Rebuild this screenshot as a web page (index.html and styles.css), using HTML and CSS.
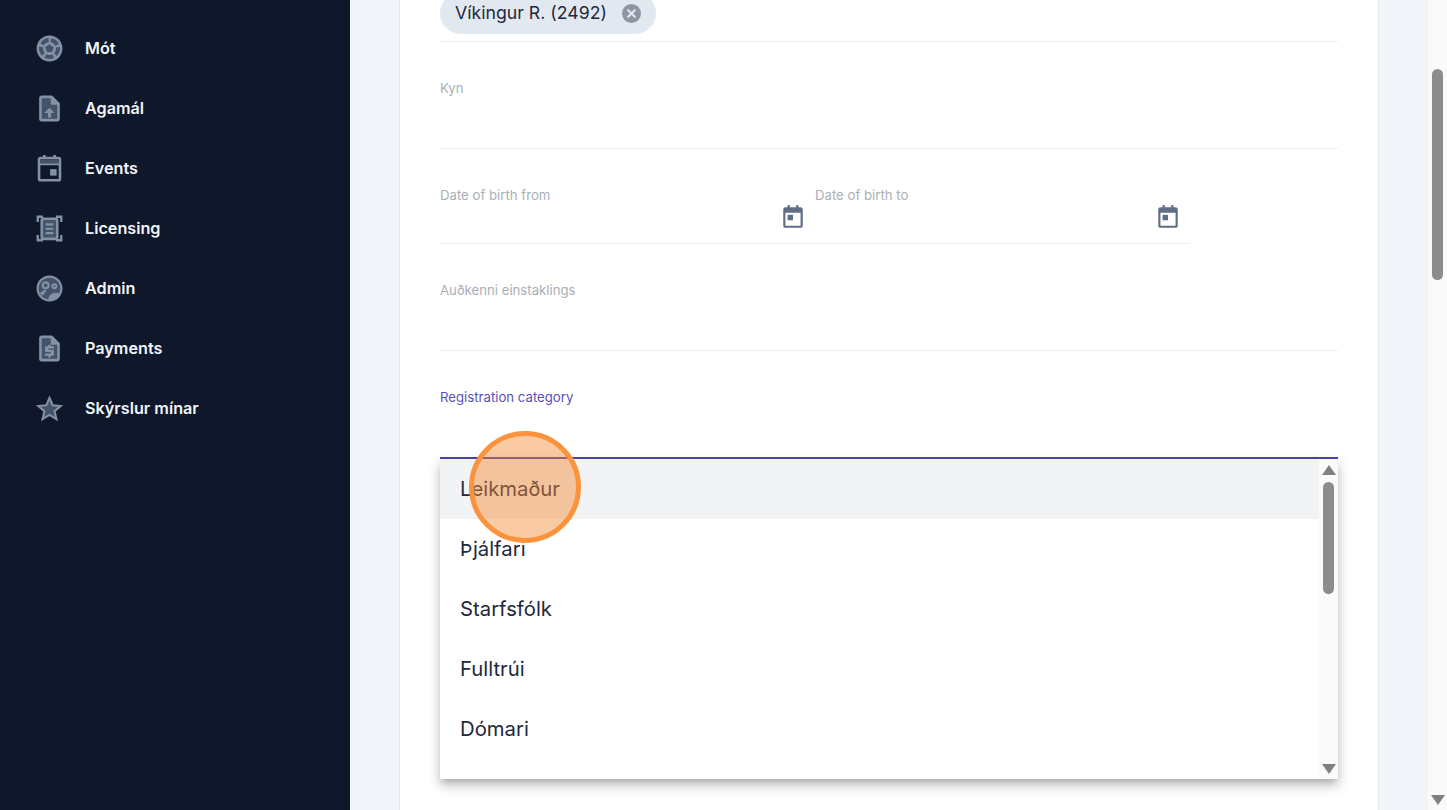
FILE: index.html
```html
<!DOCTYPE html>
<html lang="is">
<head>
<meta charset="utf-8">
<title>Registration</title>
<link rel="stylesheet" href="styles.css">
</head>
<body>
<div class="app">
  <nav class="sidebar">
    <a class="nav-item"><svg class="nav-icon" viewBox="0 0 24 24">
      <circle class="lit" cx="12" cy="12" r="10"/>
      <circle class="ring" cx="12" cy="12" r="6.600" transform="rotate(-81 12 12)"/>
      <path class="dim" d="M12 8.700l3.200 2.300-1.200 3.700h-4L8.800 11z"/>
    </svg><span>Mót</span></a>
    <a class="nav-item"><svg class="nav-icon" viewBox="0 0 24 24">
      <path class="dim edge" d="M6 3h7.600L19 8.400V20a1 1 0 0 1-1 1H6a1 1 0 0 1-1-1V4a1 1 0 0 1 1-1z"/>
      <path class="lit" d="M13 2l7 7h-7z"/>
      <path class="lit" d="M12 11.500l4 4h-2.800V19h-2.400v-3.500H8z"/>
    </svg><span>Agamál</span></a>
    <a class="nav-item"><svg class="nav-icon" viewBox="0 0 24 24">
      <path class="lit" d="M7 1.500h2V4H7zM15 1.500h2V4h-2z"/>
      <rect class="edge none" x="3.900" y="3.900" width="16.200" height="17.200" rx="1.200"/>
      <rect class="dim" x="4.900" y="4.900" width="14.200" height="3.100"/>
      <rect class="lit" x="3.900" y="8" width="16.200" height="1.500"/>
      <rect class="lit" x="12.500" y="12.500" width="5" height="5"/>
    </svg><span>Events</span></a>
    <a class="nav-item"><svg class="nav-icon" viewBox="0 0 24 24">
      <path class="lit" d="M2 2h5v1.800H3.800V7H2zM17 2h5v5h-1.800V3.800H17zM2 17h1.800v3.200H7V22H2zM20.200 17H22v5h-5v-1.800h3.200z"/>
      <rect class="dim edge" x="6" y="4.500" width="12" height="15.500" rx="1.500"/>
      <path class="lit" d="M9 8h6v1.600H9zM9 11.400h6V13H9zM9 14.800h6v1.600H9z"/>
    </svg><span>Licensing</span></a>
    <a class="nav-item"><svg class="nav-icon" viewBox="0 0 24 24">
      <circle class="dim edge wide" cx="12" cy="12" r="9.200"/>
      <circle class="none edge wide" cx="9" cy="9.500" r="2.300"/>
      <circle class="none edge wide" cx="15.800" cy="10.200" r="1.500"/>
      <path class="lit" d="M4.500 15.500L8.500 13l1.300.4-3 4.200z"/>
      <path class="lit" d="M11 20.500c.3-3 2.300-5.300 6-5.300 1.300 0 2.300.3 3.200.8a9 9 0 0 1-7.700 4.800z"/>
    </svg><span>Admin</span></a>
    <a class="nav-item"><svg class="nav-icon" viewBox="0 0 24 24">
      <path class="dim edge" d="M6 3h7.600L19 8.400V20a1 1 0 0 1-1 1H6a1 1 0 0 1-1-1V4a1 1 0 0 1 1-1z"/>
      <path class="lit" d="M13 2l7 7h-7z"/>
      <path class="lit" d="M11 9h2v1.200h2.500v1.800h-4.300v1h3.300a1 1 0 0 1 1 1v2.600a1 1 0 0 1-1 1H13V19h-2v-1.400H8.500v-1.800h4.400v-1H9.500a1 1 0 0 1-1-1v-2.600a1 1 0 0 1 1-1H11z"/>
    </svg><span>Payments</span></a>
    <a class="nav-item"><svg class="nav-icon" viewBox="0 0 24 24">
      <path class="dim edge thin" d="M12 3.800l2.450 5.700 6.200.55-4.700 4.070 1.400 6.060L12 16.980l-5.350 3.200 1.400-6.060-4.700-4.070 6.200-.55z"/>
    </svg><span>Skýrslur mínar</span></a>
  </nav>

  <main class="content">
    <form class="card">
      <div class="row chip-row">
        <span class="chip">Víkingur R. (2492)
          <svg class="chip-x" viewBox="0 0 20 20"><circle cx="10" cy="10" r="10"/><path d="M6.500 6.500l7 7M13.500 6.500l-7 7"/></svg>
        </span>
      </div>
      <div class="row field"><label class="label">Kyn</label></div>
      <div class="date-row">
        <div class="date-field"><label class="label">Date of birth from</label>
          <svg class="cal" viewBox="0 0 24 24"><path fill-rule="evenodd" d="M7 1h2v2h6V1h2v2h2a2 2 0 0 1 2 2v15a2 2 0 0 1-2 2H5a2 2 0 0 1-2-2V5a2 2 0 0 1 2-2h2V1zM5 8v12h14V8H5z"/><rect x="7" y="10" width="5" height="5"/></svg>
        </div>
        <div class="date-field"><label class="label">Date of birth to</label>
          <svg class="cal" viewBox="0 0 24 24"><path fill-rule="evenodd" d="M7 1h2v2h6V1h2v2h2a2 2 0 0 1 2 2v15a2 2 0 0 1-2 2H5a2 2 0 0 1-2-2V5a2 2 0 0 1 2-2h2V1zM5 8v12h14V8H5z"/><rect x="7" y="10" width="5" height="5"/></svg>
        </div>
      </div>
      <div class="row field"><label class="label">Auðkenni einstaklings</label></div>
      <div class="row field active"><label class="label">Registration category</label>
        <div class="dropdown">
          <ul class="options">
            <li class="option selected">Leikmaður</li>
            <li class="option">Þjálfari</li>
            <li class="option">Starfsfólk</li>
            <li class="option">Fulltrúi</li>
            <li class="option">Dómari</li>
          </ul>
          <div class="dd-scroll">
            <span class="arrow up"></span>
            <span class="dd-thumb"></span>
            <span class="arrow down push"></span>
          </div>
        </div>
        <span class="marker"></span>
      </div>
    </form>
  </main>

  <div class="page-scroll">
    <span class="page-thumb"></span>
    <span class="arrow down push"></span>
  </div>
</div>
</body>
</html>
```

FILE: styles.css
```css
* { box-sizing: border-box; }
html, body { margin: 0; height: 100%; overflow: hidden; }
body { font-family: Inter, "Noto Sans", sans-serif; color: #1e293b; }

.app { display: flex; height: 810px; width: 1447px; overflow: hidden; }

.sidebar {
  flex: 0 0 350px;
  background: #0f172a;
  padding: 18px 0 0 35px;
  display: flex;
  flex-direction: column;
}
.nav-item {
  height: 60px;
  display: flex;
  align-items: center;
  gap: 20px;
  color: #f1f5f9;
  font-size: 16.200px;
  font-weight: 600;
}
.nav-icon { width: 31px; height: 31px; flex: none; margin-left: -1px; }
.nav-icon .lit { fill: #8391a6; }
.nav-icon .dim { fill: #45536a; }
.nav-icon .none { fill: none; }
.nav-icon .edge { stroke: #8391a6; stroke-width: 2; }
.nav-icon .edge.wide { stroke-width: 1.700; }
.nav-icon .edge.thin { stroke-width: 1.600; }
.nav-icon .ring {
  fill: none;
  stroke: #45536a;
  stroke-width: 3;
  stroke-dasharray: 6.300 2;
}

.content {
  flex: 0 0 1078px;
  background: #f1f5f9;
  padding: 0 49px;
  overflow: hidden;
}
.card {
  height: 860px;
  margin-top: -8px;
  background: #fff;
  border-left: 1px solid #e5e8ee;
  border-right: 1px solid #e5e8ee;
  padding: 0 40px;
}
.row { border-bottom: 1px solid #eef0f3; position: relative; }
.chip-row { height: 50px; }
.chip {
  display: inline-flex;
  align-items: center;
  gap: 15px;
  height: 42px;
  padding: 0 15px;
  border-radius: 21px;
  background: #e2e8f0;
  font-size: 17.700px;
  line-height: 42px;
  color: #1e293b;
}
.chip-x { width: 19px; height: 19px; flex: none; }
.chip-x circle { fill: #8f96a3; }
.chip-x path { stroke: #e2e8f0; stroke-width: 2.200; stroke-linecap: round; fill: none; }

.field { height: 107px; padding-top: 38px; }
.label { display: block; font-size: 13.200px; line-height: 16px; color: #a9afb8; }
.date-row { display: flex; width: 750px; height: 95px; border-bottom: 1px solid #eef0f3; }
.date-field { flex: 0 0 375px; padding-top: 38px; position: relative; display: flex; }
.cal { width: 26px; height: 26px; fill: #5f6e84; position: absolute; left: 340px; top: 55px; }
.date-field .label { flex: 1; }

.field.active { height: 108px; border-bottom: 2px solid #4f46a8; }
.field.active .label { color: #5b50b8; }

.dropdown {
  position: absolute;
  left: 0;
  top: 108px;
  width: 898px;
  height: 320px;
  background: #fff;
  box-shadow: 0 5px 6px -3px rgba(0,0,0,.2), 0 8px 10px 1px rgba(0,0,0,.12), 0 3px 12px 1px rgba(0,0,0,.1);
  display: flex;
  overflow: hidden;
}
.options { list-style: none; margin: 0; padding: 0; flex: 1; }
.option {
  height: 60px;
  line-height: 60px;
  padding-left: 20px;
  font-size: 20.300px;
  color: #1e293b;
}
.option.selected { background: #f2f3f5; }

.dd-scroll {
  flex: 0 0 19px;
  background: #fafafa;
  display: flex;
  flex-direction: column;
  align-items: center;
  padding: 6px 0 5px;
}
.dd-thumb { width: 11px; height: 112px; margin-top: 7px; background: #8c8c8c; border-radius: 6px; }
.arrow { width: 0; height: 0; border-left: 7px solid transparent; border-right: 7px solid transparent; }
.arrow.up { border-bottom: 10px solid #808080; }
.arrow.down { border-top: 10px solid #808080; }
.push { margin-top: auto; }

.marker {
  position: absolute;
  left: 29px;
  top: 80px;
  width: 112px;
  height: 112px;
  border-radius: 50%;
  border: 5px solid #fb923c;
  background: rgba(245, 138, 50, .45);
  z-index: 2;
}

.page-scroll {
  flex: 0 0 19px;
  background: #fafafa;
  display: flex;
  flex-direction: column;
  align-items: center;
  padding: 69px 0 5px;
}
.page-thumb { width: 11px; height: 211px; background: #8c8c8c; border-radius: 6px; }
```
